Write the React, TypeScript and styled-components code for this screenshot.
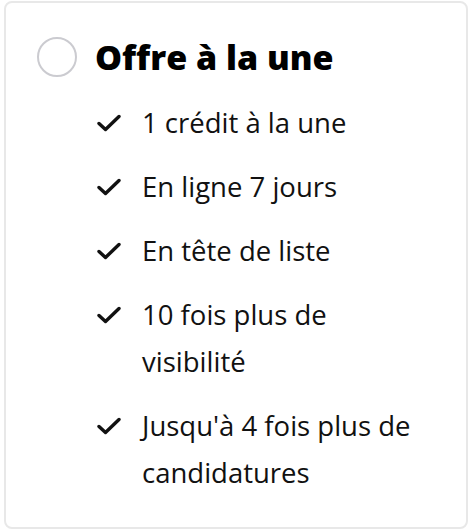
import React from "react";
import styled, { createGlobalStyle } from "styled-components";

const GlobalStyle = createGlobalStyle`
  html, body {
    margin: 0;
    padding: 0;
    background: #ffffff;
  }
  body {
    font-family: "Open Sans", "Noto Sans", sans-serif;
    color: #111111;
  }
`;

const Card = styled.div`
  box-sizing: border-box;
  width: 464px;
  height: 528px;
  margin: 1px 0 0 4px;
  border: 2px solid #e8e8e8;
  border-radius: 8px;
  padding: 34px 35px 30px 31px;
  display: flex;
  flex-direction: column;
  gap: 22px;
`;

const Header = styled.div`
  display: flex;
  align-items: center;
  gap: 18px;
`;

const Radio = styled.span`
  box-sizing: border-box;
  width: 40px;
  height: 40px;
  border-radius: 50%;
  border: 2px solid #cbcbd0;
  flex-shrink: 0;
`;

const Title = styled.h2`
  margin: 0;
  font-size: 34px;
  line-height: 40px;
  font-weight: 800;
  color: #000000;
`;

const List = styled.ul`
  list-style: none;
  margin: 0;
  padding: 0 0 0 60px;
  display: flex;
  flex-direction: column;
  gap: 17px;
`;

const Item = styled.li`
  display: flex;
  align-items: flex-start;
  gap: 21px;
  font-size: 27.5px;
  line-height: 47px;
`;

const Check = styled.span`
  width: 24px;
  height: 47px;
  display: flex;
  align-items: center;
  flex-shrink: 0;
`;

const Label = styled.span`
  flex: 1;
`;

const features = [
  "1 crédit à la une",
  "En ligne 7 jours",
  "En tête de liste",
  "10 fois plus de visibilité",
  "Jusqu'à 4 fois plus de candidatures",
];

const CheckIcon = () => (
  <svg width="24" height="18" viewBox="0 0 24 18" fill="none">
    <path
      d="M2 9.5 L8.5 15.5 L22 2.5"
      stroke="#111"
      strokeWidth="3.4"
      strokeLinecap="round"
      strokeLinejoin="round"
    />
  </svg>
);

const App = (): JSX.Element => {
  return (
    <React.Fragment>
      <GlobalStyle />
      <Card>
        <Header>
          <Radio />
          <Title>Offre à la une</Title>
        </Header>
        <List>
          {features.map((feature) => (
            <Item key={feature}>
              <Check>
                <CheckIcon />
              </Check>
              <Label>{feature}</Label>
            </Item>
          ))}
        </List>
      </Card>
    </React.Fragment>
  );
};

export default App;
